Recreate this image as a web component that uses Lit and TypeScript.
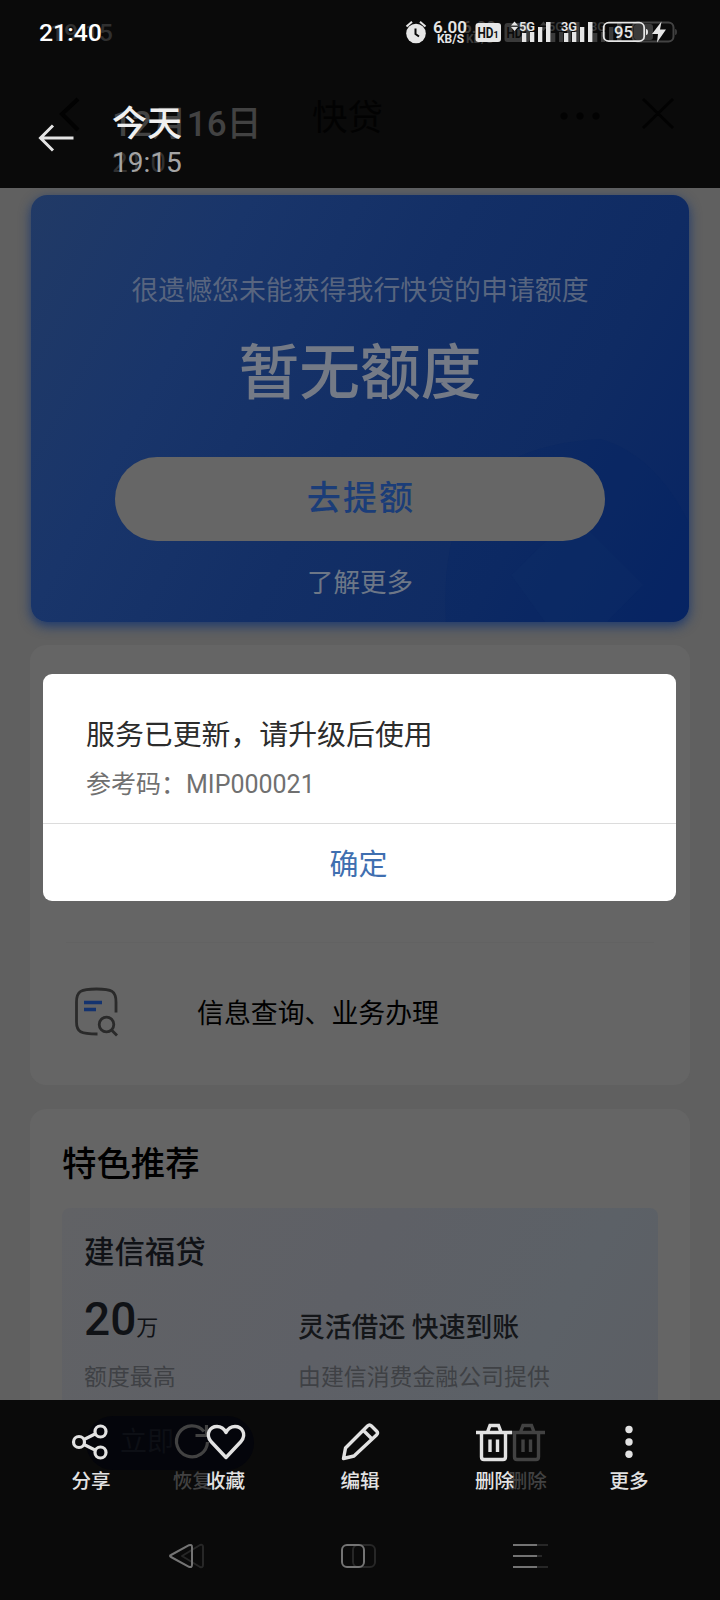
import { LitElement, html, svg, css } from "lit";
import { customElement } from "lit/decorators.js";

const statusGlyphs = () => svg`
  <text x="33" y="33" font-size="16.5" font-weight="600" textLength="34" lengthAdjust="spacingAndGlyphs">6.00</text>
  <text x="37" y="43" font-size="12" font-weight="700" textLength="27" lengthAdjust="spacingAndGlyphs">KB/S</text>
  <rect x="75.500" y="23" width="25.500" height="19" rx="3"/>
  <text x="77.500" y="37.500" font-size="14" font-weight="700" fill="#111" textLength="16" lengthAdjust="spacingAndGlyphs">HD</text>
  <text x="93.500" y="37.500" font-size="9" font-weight="700" fill="#111">1</text>
  <path d="M111 25.500l3.500-4 3.500 4zM111 27l3.500 4 3.500-4z"/>
  <text x="119" y="30.500" font-size="12.500" font-weight="600" textLength="16" lengthAdjust="spacingAndGlyphs">5G</text>
  <path d="M122 33h4.300v9H122zM130 32h4.300v10H130zM138 27h4.300v15H138zM146 22h4.500v20H146z"/>
  <text x="161" y="30.500" font-size="12.500" font-weight="600" textLength="16" lengthAdjust="spacingAndGlyphs">3G</text>
  <path d="M164 33h4.300v9H164zM172 32h4.300v10H172zM180 27h4.300v15H180zM188 22h4.500v20H188z"/>`;

@customElement("app-root")
export class AppRoot extends LitElement {
  static styles = css`
    :host {
      display: flex;
      flex-direction: column;
      position: relative;
      width: 720px;
      height: 1600px;
      overflow: hidden;
      background: #606060;
      font-family: Roboto, "Noto Sans CJK SC", sans-serif;
      color: #000;
    }
    svg { display: block; overflow: visible; }
    .header {
      flex: none;
      position: relative;
      height: 188px;
      background: #0a0a0a;
      color: #e8e8e8;
    }
    .status { display: flex; justify-content: space-between; height: 64px; }
    .clock {
      position: relative;
      padding-left: 39px;
      line-height: 66px;
      font-size: 24.8px;
      font-weight: 500;
      color: #fff;
    }
    .ghost { position: absolute; z-index: 0; color: #424242; white-space: nowrap; }
    .front { position: relative; z-index: 1; }
    .clock .ghost { left: 50px; top: 0; color: #303030; }
    .titlebar { display: flex; align-items: flex-start; padding: 36px 0 0 38px; }
    .back { padding-top: 23px; }
    .stamp { margin-left: 37px; padding-top: 4px; }
    .day { position: relative; font-size: 35px; line-height: 42px; font-weight: 500; color: #f0f0f0; }
    .day .ghost { left: 0; top: 0; }
    .hour { position: relative; font-size: 28px; line-height: 36px; color: #a4a4a4; margin-top: -1px; }
    .hour .ghost { left: 0; top: 0; color: #303030; }
    .under { position: absolute; left: 0; top: 65px; color: #020202; }

    .page {
      flex: 1;
      min-height: 0;
      overflow: hidden;
      padding: 7px 31px 0;
      display: flex;
      flex-direction: column;
    }
    .hero {
      flex: none;
      position: relative;
      height: 427px;
      border-radius: 16px;
      background: linear-gradient(118deg, #213a66 0%, #19356a 25%, #132f66 50%, #0f2b63 75%, #072463 100%);
      box-shadow: 0 4px 12px rgba(20, 52, 112, .9);
      display: flex;
      flex-direction: column;
      align-items: center;
    }
    .shade { position: absolute; inset: 0; width: 658px; height: 427px; border-radius: 16px; overflow: hidden; }
    .hero > div, .hero > button { position: relative; }
    .note { margin-top: 76px; font-size: 26.9px; line-height: 40px; color: #58657f; }
    .amount { margin-top: 25px; font-size: 60.8px; line-height: 76px; font-weight: 500; color: #747a86; }
    .raise {
      margin-top: 45px;
      width: 490px;
      height: 84px;
      border: 0;
      border-radius: 42px;
      background: #666;
      color: #1b3d78;
      font: 500 34px/78px Roboto, "Noto Sans CJK SC", sans-serif;
      letter-spacing: 2.2px;
      padding: 0 0 3px 2px;
    }
    .more { margin-top: 22px; font-size: 26.5px; line-height: 40px; color: #6d7787; }

    .services {
      flex: none;
      height: 440px;
      margin: 23px -1px 0;
      border-radius: 16px;
      background: #656565;
      display: flex;
      flex-direction: column;
      justify-content: flex-end;
    }
    .service {
      height: 143px;
      margin: 0 36px;
      border-top: 1px solid #626262;
      display: flex;
      align-items: center;
      font-size: 26.9px;
      padding-bottom: 4px;
      box-sizing: border-box;
    }
    .service svg { margin: 0 78px 0 9px; }
    .service span { padding-bottom: 2px; }
    .offers {
      flex: none;
      height: 400px;
      margin: 24px -1px 0;
      border-radius: 16px;
      background: #656565;
      padding: 33px 32px 0;
    }
    .offers h2 { margin: 0; font-size: 34.4px; line-height: 44px; font-weight: 500; }
    .offer {
      margin-top: 22px;
      height: 260px;
      width: 596px;
      box-sizing: border-box;
      border-radius: 8px;
      background: linear-gradient(120deg, #616265 0%, #5e6066 45%, #5c6167 75%, #5c5e63 100%);
      padding: 25px 22px 0;
      color: #101216;
    }
    .offer h3 { margin: 0; font-size: 30.4px; line-height: 40px; font-weight: 500; }
    .cols { display: grid; grid-template-columns: 214px 1fr; margin-top: 16px; }
    .value { height: 60px; display: flex; align-items: baseline; line-height: 60px; }
    .value b { font-size: 46px; font-weight: 500; }
    .value span { font-size: 22px; }
    .desc { font-size: 26.8px; line-height: 60px; height: 60px; padding-top: 9px; box-sizing: border-box; font-weight: 500; color: #141619; }
    .small { font-size: 22.9px; line-height: 34px; margin-top: 12px; color: #3f4145; }

    .dialog {
      position: absolute;
      left: 43px;
      top: 674px;
      width: 633px;
      height: 227px;
      border-radius: 9px;
      background: #fff;
      display: flex;
      flex-direction: column;
    }
    .body { height: 150px; border-bottom: 1px solid #dcdcdc; padding: 40px 43px 0; box-sizing: border-box; }
    .msg { font-size: 28.9px; line-height: 42px; color: #2c2c2c; }
    .code { font-size: 25px; line-height: 36px; margin-top: 11px; color: #707070; }
    .ok {
      flex: 1;
      border: 0;
      background: none;
      padding: 4px 2px 0 0;
      font: 29px/72px Roboto, "Noto Sans CJK SC", sans-serif;
      color: #3f6fb0;
    }

    .footer { flex: none; position: relative; height: 200px; background: #0a0a0a; color: #e2e2e2; }
    .plate {
      position: absolute;
      left: 86px;
      top: 16px;
      width: 168px;
      height: 54px;
      border-radius: 27px;
      background: #04050b;
      color: #0d0f15;
      font-size: 27px;
      line-height: 52px;
      padding-left: 34px;
      box-sizing: border-box;
    }
    .tools {
      position: relative;
      display: grid;
      grid-template-columns: repeat(5, 134.5px);
      justify-content: center;
      padding-top: 20px;
    }
    .tool { position: relative; display: flex; flex-direction: column; align-items: center; font-size: 19.6px; font-weight: 500; }
    .tool span { line-height: 28px; margin-top: 4px; }
    .echo {
      position: absolute;
      top: 0;
      width: 60px;
      color: #424242;
      display: flex;
      flex-direction: column;
      align-items: center;
    }
    .echo.restore { left: 4px; }
    .echo.remove { left: 70px; }
    .can { position: relative; z-index: 1; margin-left: -2px; }
    .nav { position: relative; margin-top: 38px; height: 60px; }
  `;

  private trash() {
    return html`<svg width="44" height="44" viewBox="0 0 44 44" fill="none" stroke="currentColor" stroke-width="3.400">
      <path d="M4 12.500H40M9.500 12.500V37q0 2.500 2.500 2.500H31q2.500 0 2.500-2.500V12.500M15.500 12L18 5.500h8.500l2.500 6.500M18 19.500v12.500M25.500 19.500v12.500"/>
    </svg>`;
  }

  render() {
    return html`
      <header class="header">
        <svg class="under" width="720" height="100" fill="none" stroke="#020202" stroke-width="4">
          <path d="M78 34L62 49l16 16"/>
          <g fill="#020202" stroke="none"><circle cx="564" cy="51" r="3.500"/><circle cx="580" cy="51" r="3.500"/><circle cx="596" cy="51" r="3.500"/></g>
          <path d="M643 34l30 29M673 34l-30 29" stroke-width="3"/>
          <text x="312" y="65" font-size="35.500" fill="#020202" stroke="none">快贷</text>
        </svg>
        <div class="status">
          <div class="clock"><span class="ghost">19:15</span><span class="front">21:40</span></div>
          <svg width="320" height="64" viewBox="0 0 320 64">
            <g fill="#b8b8b8" opacity=".28" transform="translate(29 0)">
              ${statusGlyphs()}
              <rect x="203.500" y="22.500" width="41" height="19" rx="5" fill="none" stroke="#d8d8d8" stroke-width="2"/>
              <rect x="205" y="24" width="19" height="16" rx="3"/>
              <path d="M246 29q2 0 2 3t-2 3z"/>
            </g>
            <g fill="#e6e6e6">
              <circle cx="16" cy="33.500" r="9.800"/>
              <path d="M6.500 26.500l5.500-4.800M25.500 26.500L20 21.700" stroke="#e6e6e6" stroke-width="2"/>
              <path d="M15.500 28.500v5.500l3.500 2.500" fill="none" stroke="#0a0a0a" stroke-width="2"/>
              ${statusGlyphs()}
              <rect x="203.700" y="22.700" width="40.500" height="18.500" rx="5" fill="none" stroke="#e6e6e6" stroke-width="1.800"/>
              <path d="M246 29q2 0 2 3t-2 3z"/>
              <text x="214" y="38" font-size="16.500" font-weight="500" textLength="19" lengthAdjust="spacingAndGlyphs">95</text>
              <path d="M261.500 21.500l-9.500 12.500h6l-1 8.500 9-13h-6z"/>
            </g>
          </svg>
        </div>
        <div class="titlebar">
          <svg class="back" width="37" height="30" viewBox="0 0 37 30" fill="none" stroke="#e4e4e4" stroke-width="3">
            <path d="M2 15H35.500M15 2.500L2.500 15 15 27.500"/>
          </svg>
          <div class="stamp">
            <div class="day"><span class="ghost">12月16日</span><span class="front">今天</span></div>
            <div class="hour"><span class="ghost">21:05</span><span class="front">19:15</span></div>
          </div>
        </div>
      </header>

      <main class="page">
        <section class="hero">
          <svg class="shade" viewBox="0 0 658 427">
            <path d="M415 427C408 300 460 250 570 244c40 12 68 44 88 84v99z" fill="#042265" opacity=".25"/>
            <path d="M480 380l62-60 70 70-36 37h-62z" fill="#102f68" opacity=".25"/>
          </svg>
          <div class="note">很遗憾您未能获得我行快贷的申请额度</div>
          <div class="amount">暂无额度</div>
          <button class="raise">去提额</button>
          <div class="more">了解更多</div>
        </section>
        <section class="services">
          <div class="service">
            <svg width="44" height="50" viewBox="0 0 44 50" fill="none" stroke="#2a2a2a" stroke-width="2.800">
              <path d="M41 25.500V15C41 4 37 2 21.500 2S1.500 4 1.500 15v20c0 10 4 12 21 12"/>
              <circle cx="31.500" cy="37.500" r="7.300"/><path d="M36.500 43l5.500 5.500"/>
              <path d="M9 15.500h18M9 22.500h12" stroke="#14336f" stroke-width="3.400"/>
            </svg>
            <span>信息查询、业务办理</span>
          </div>
        </section>
        <section class="offers">
          <h2>特色推荐</h2>
          <div class="offer">
            <h3>建信福贷</h3>
            <div class="cols">
              <div class="value"><b>20</b><span>万</span></div>
              <div class="desc">灵活借还 快速到账</div>
              <div class="small">额度最高</div>
              <div class="small">由建信消费金融公司提供</div>
            </div>
          </div>
        </section>
      </main>

      <footer class="footer">
        <div class="plate">立即</div>
        <div class="tools">
          <div class="tool">
            <svg width="44" height="44" viewBox="0 0 44 44" fill="none" stroke="currentColor" stroke-width="3.200">
              <circle cx="10" cy="22" r="5.500"/><circle cx="31.500" cy="11.500" r="5.500"/><circle cx="31.500" cy="32.500" r="5.500"/>
              <path d="M15 19.500l11.500-5.700M15 24.500l11.500 5.700"/>
            </svg>
            <span>分享</span>
          </div>
          <div class="tool">
            <div class="echo restore">
              <svg width="44" height="44" viewBox="0 0 44 44" fill="none" stroke="currentColor" stroke-width="3.200">
                <path d="M34 11.500A15.500 15.500 0 1 0 37.500 22M36.500 5v10.500H25.500"/>
              </svg>
              <span>恢复</span>
            </div>
            <svg class="front" width="44" height="44" viewBox="0 0 44 44" fill="none" stroke="currentColor" stroke-width="3.400" stroke-linejoin="round">
              <path d="M22 37.500L7 21.500C1 14 6 6.500 13 6.500c4.500 0 7.200 2.500 9 6 1.800-3.500 4.500-6 9-6 7 0 12 7.500 6 15z"/>
            </svg>
            <span class="front">收藏</span>
          </div>
          <div class="tool">
            <svg width="44" height="44" viewBox="0 0 44 44" fill="none" stroke="currentColor" stroke-width="3.400" stroke-linejoin="round">
              <path d="M5.500 38.500L7.500 28 29.500 6q2-2 4 0l5 5q2 2 0 4L16 36zM25.500 10.500l8.500 8.500"/>
            </svg>
            <span>编辑</span>
          </div>
          <div class="tool">
            <div class="echo remove">${this.trash()}<span>删除</span></div>
            <div class="can">${this.trash()}</div>
            <span class="front">删除</span>
          </div>
          <div class="tool">
            <svg width="44" height="44" viewBox="0 0 44 44" fill="currentColor">
              <circle cx="22" cy="9.500" r="3.700"/><circle cx="22" cy="22" r="3.700"/><circle cx="22" cy="34.200" r="3.700"/>
            </svg>
            <span>更多</span>
          </div>
        </div>
        <svg class="nav" width="720" height="60" viewBox="0 0 720 60" fill="none" stroke-width="2" stroke-linejoin="round">
          <g stroke="#272727">
            <path d="M182 22L200 11q3-1 3 2v18q0 3-3 2z"/>
            <rect x="353" y="11" width="22" height="22" rx="5"/>
            <path d="M535 11h13M535 22h7M535 33h13"/>
          </g>
          <g stroke="#747474">
            <path d="M171 23q-2-1 0-2L189 11.200q3-1 3 2v17.600q0 3-3 2z"/>
            <rect x="342" y="11" width="22" height="22" rx="5"/>
            <path d="M513 11h24M513 22h24M513 33h24"/>
          </g>
        </svg>
      </footer>

      <div class="dialog" role="dialog">
        <div class="body">
          <div class="msg">服务已更新，请升级后使用</div>
          <div class="code">参考码：MIP000021</div>
        </div>
        <button class="ok">确定</button>
      </div>
    `;
  }
}
